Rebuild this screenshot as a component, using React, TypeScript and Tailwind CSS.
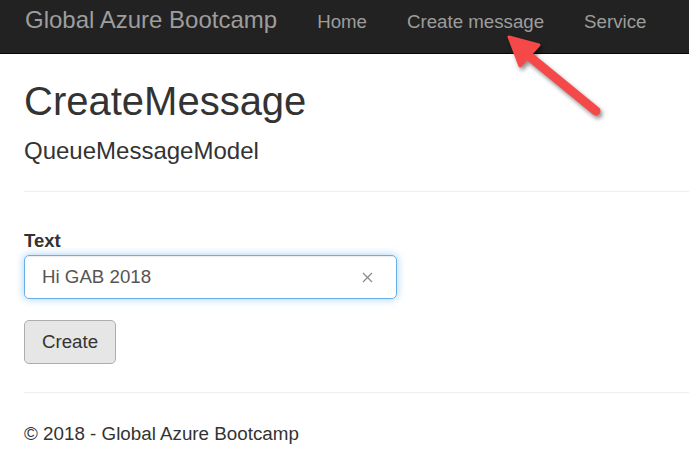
import React from "react";

const NAV_LINKS = ["Home", "Create message", "Service"];

function Arrow() {
  // red annotation arrow pointing at "Create message"
  return (
    <svg
      className="pointer-events-none absolute left-0 top-0"
      width={689}
      height={452}
      style={{ filter: "drop-shadow(2px 3px 2px rgba(0,0,0,0.45))" }}
      aria-hidden="true"
    >
      <line x1={524} y1={52} x2={596} y2={111} stroke="#f54848" strokeWidth={9} strokeLinecap="round" />
      <polygon points="509,37 539,45 520,66" fill="#f54848" stroke="#f54848" strokeWidth={3} strokeLinejoin="round" />
    </svg>
  );
}

export default function App() {
  return (
    <div className="relative h-[452px] w-[689px] overflow-hidden bg-white font-['Liberation_Sans',Arial,sans-serif] text-[#333]">
      {/* Navbar */}
      <nav className="flex h-[54px] items-baseline border-b border-[#080808] bg-[#222] pl-[25px] pt-[6px]">
        <span className="text-[24px] leading-[28px] text-[#9d9d9d]">Global Azure Bootcamp</span>
        <ul className="ml-[40px] flex items-baseline gap-[40px]">
          {NAV_LINKS.map((link) => (
            <li key={link} className="text-[18.7px] leading-[28px] text-[#9d9d9d]">
              {link}
            </li>
          ))}
        </ul>
      </nav>

      <main className="pl-6">
        <h2 className="mt-[25px] text-[40px] leading-[44px]">CreateMessage</h2>
        <h4 className="mt-[15px] text-[24px] leading-[26px]">QueueMessageModel</h4>
        <hr className="mt-[27px] border-t border-[#eee]" />

        <form className="flex flex-col items-start">
          <label className="mt-[38px] text-[18.5px] font-bold leading-[22px]">Text</label>
          <div className="mt-[3px] flex h-[44px] w-[373px] items-center justify-between rounded-[5px] border border-[#66afe9] pl-[17px] pr-[23px] shadow-[inset_0_1px_1px_rgba(0,0,0,0.075),0_0_8px_rgba(102,175,233,0.6)]">
            <span className="text-[18.7px] text-[#555]">Hi GAB 2018</span>
            <svg width="11" height="11" viewBox="0 0 11 11" aria-hidden="true">
              <path d="M1 1 L10 10 M10 1 L1 10" stroke="#8a8a8a" strokeWidth={1.2} />
            </svg>
          </div>
          <button
            type="button"
            className="mt-[21px] h-[44px] rounded-[5px] border border-[#adadad] bg-[#e6e6e6] px-[17px] text-[18.7px] text-[#333]"
          >
            Create
          </button>
        </form>

        <hr className="mt-[28px] border-t border-[#eee]" />
        <footer>
          <p className="mt-[30px] text-[18.8px] leading-[22px]">© 2018 - Global Azure Bootcamp</p>
        </footer>
      </main>

      <Arrow />
    </div>
  );
}
